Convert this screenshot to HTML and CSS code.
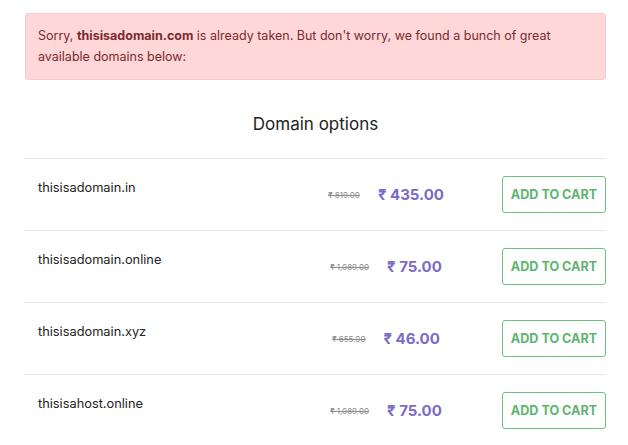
FILE: index.html
```html
<!DOCTYPE html>
<html lang="en">
<head>
<meta charset="utf-8">
<title>Domain options</title>
<link rel="stylesheet" href="styles.css">
</head>
<body>
<div class="page">
  <div class="alert">
    <p class="alert-text">Sorry, <strong>thisisadomain.com</strong> is already taken. But don't worry, we found a bunch of great available domains below:</p>
  </div>
  <h2 class="title">Domain options</h2>
  <ul class="list">
    <li class="row">
      <span class="name">thisisadomain.in</span>
      <span class="prices"><s class="old">₹ 819.00</s><span class="price">₹ 435.00</span></span>
      <button class="cart">ADD TO CART</button>
    </li>
    <li class="row">
      <span class="name">thisisadomain.online</span>
      <span class="prices"><s class="old">₹ 1,089.00</s><span class="price">₹ 75.00</span></span>
      <button class="cart">ADD TO CART</button>
    </li>
    <li class="row">
      <span class="name">thisisadomain.xyz</span>
      <span class="prices"><s class="old">₹ 655.00</s><span class="price">₹ 46.00</span></span>
      <button class="cart">ADD TO CART</button>
    </li>
    <li class="row">
      <span class="name">thisisahost.online</span>
      <span class="prices"><s class="old">₹ 1,089.00</s><span class="price">₹ 75.00</span></span>
      <button class="cart">ADD TO CART</button>
    </li>
  </ul>
</div>
</body>
</html>
```
FILE: styles.css
```css
* { box-sizing: border-box; }
html, body { margin: 0; padding: 0; background: #ffffff; }
body {
  font-family: Inter, "Noto Sans", "DejaVu Sans", sans-serif;
  color: #222222;
}
.page {
  padding: 13px 22px 0 25px;
}
.alert {
  background: #ffd7d9;
  border: 1px solid #f9c9cc;
  border-radius: 3px;
  padding: 11px 12px 12px;
}
.alert-text {
  margin: 0;
  font-size: 12.5px;
  line-height: 21px;
  color: #7a2a2e;
}
.alert-text strong { font-weight: 700; }
.title {
  margin: 32px 0 22px;
  text-align: center;
  font-size: 17px;
  line-height: 24px;
  font-weight: 400;
  color: #222222;
}
.list {
  list-style: none;
  margin: 0;
  padding: 0;
}
.row {
  display: flex;
  align-items: center;
  border-top: 1px solid #e4e4e4;
  padding: 17px 0;
}
.name {
  flex: 1;
  align-self: flex-start;
  padding-left: 13px;
  font-size: 12.8px;
  line-height: 24px;
  color: #222222;
}
.prices {
  width: 202px;
  margin-right: 15px;
  display: flex;
  justify-content: center;
  align-items: center;
  gap: 18px;
}
.old {
  font-size: 8px;
  color: #8a8a8a;
}
.price {
  font-size: 15px;
  font-weight: 700;
  color: #7c6bc8;
}
.cart {
  width: 104px;
  height: 37px;
  background: #ffffff;
  border: 1px solid #6cc27f;
  border-radius: 3px;
  color: #5eb56f;
  font-family: Inter, "Noto Sans", sans-serif;
  font-size: 12.6px;
  font-weight: 700;
  padding: 0;
  cursor: pointer;
}
```
